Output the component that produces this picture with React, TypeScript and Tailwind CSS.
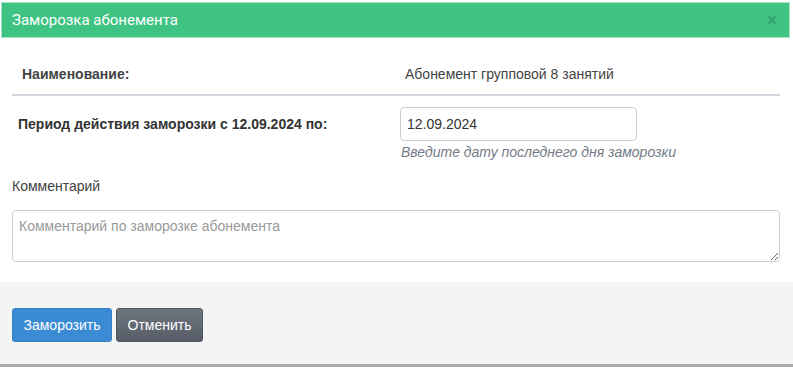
import React from "react";

export default function App() {
  return (
    <div className="w-[793px] h-[367px] bg-white relative overflow-hidden" style={{ fontFamily: '"Liberation Sans", Arial, sans-serif' }}>
      <div className="pt-[2px] pl-[1px] pr-[3px]">
        <div className="h-[36px] bg-[#3ec383] border border-[#a8e2c5] flex items-center justify-between pl-[10px] pr-[12px]">
          <span className="text-white text-[15px]" style={{ fontFamily: 'Roboto, "Liberation Sans", sans-serif' }}>Заморозка абонемента</span>
          <span className="text-[#2d8f5f] text-[18px] font-bold leading-none opacity-60">×</span>
        </div>
      </div>
      <div className="px-[12px] pr-[13px]">
        <div className="flex items-end h-[58px] pb-[9px] border-b-2 border-[#d2d6de] text-[14px]">
          <div className="w-[393px] pl-[10px] font-bold text-[#444]">Наименование:</div>
          <div className="text-[#444]">Абонемент групповой 8 занятий</div>
        </div>
        <div className="flex pt-[11px]">
          <div className="w-[388px] pl-[6px] pt-[7px] font-bold text-[14px] text-[#333]">Период действия заморозки с 12.09.2024 по:</div>
          <div className="flex flex-col">
            <input className="w-[237px] h-[34px] border border-[#ccc] rounded-[4px] px-[6px] text-[14px] text-[#333] outline-none" defaultValue="12.09.2024" />
            <span className="italic text-[14px] text-[#737b86] mt-[1px] ml-[1px]">Введите дату последнего дня заморозки</span>
          </div>
        </div>
        <div className="mt-[13px] text-[14px] text-[#444]">Комментарий</div>
        <textarea className="mt-[13px] block w-[768px] h-[52px] border border-[#ccc] rounded-[4px] px-[6px] py-[5px] text-[14px] text-[#333] placeholder:text-[#999] outline-none" placeholder="Комментарий по заморозке абонемента" />
      </div>
      <div className="absolute left-0 right-0 top-[282px] h-[82px] bg-[#f4f4f4] border-b-[3px] border-[#aaa] box-content">
        <div className="flex gap-[4px] pl-[12px] pt-[26px]">
          <button className="h-[34px] w-[100px] rounded-[3px] bg-[#3b8bd4] border border-[#3580c7] text-white text-[14px]">Заморозить</button>
          <button className="h-[34px] w-[87px] rounded-[3px] bg-gradient-to-b from-[#6f7680] to-[#565d66] border border-[#4f555c] text-white text-[14px]">Отменить</button>
        </div>
      </div>
    </div>
  );
}
